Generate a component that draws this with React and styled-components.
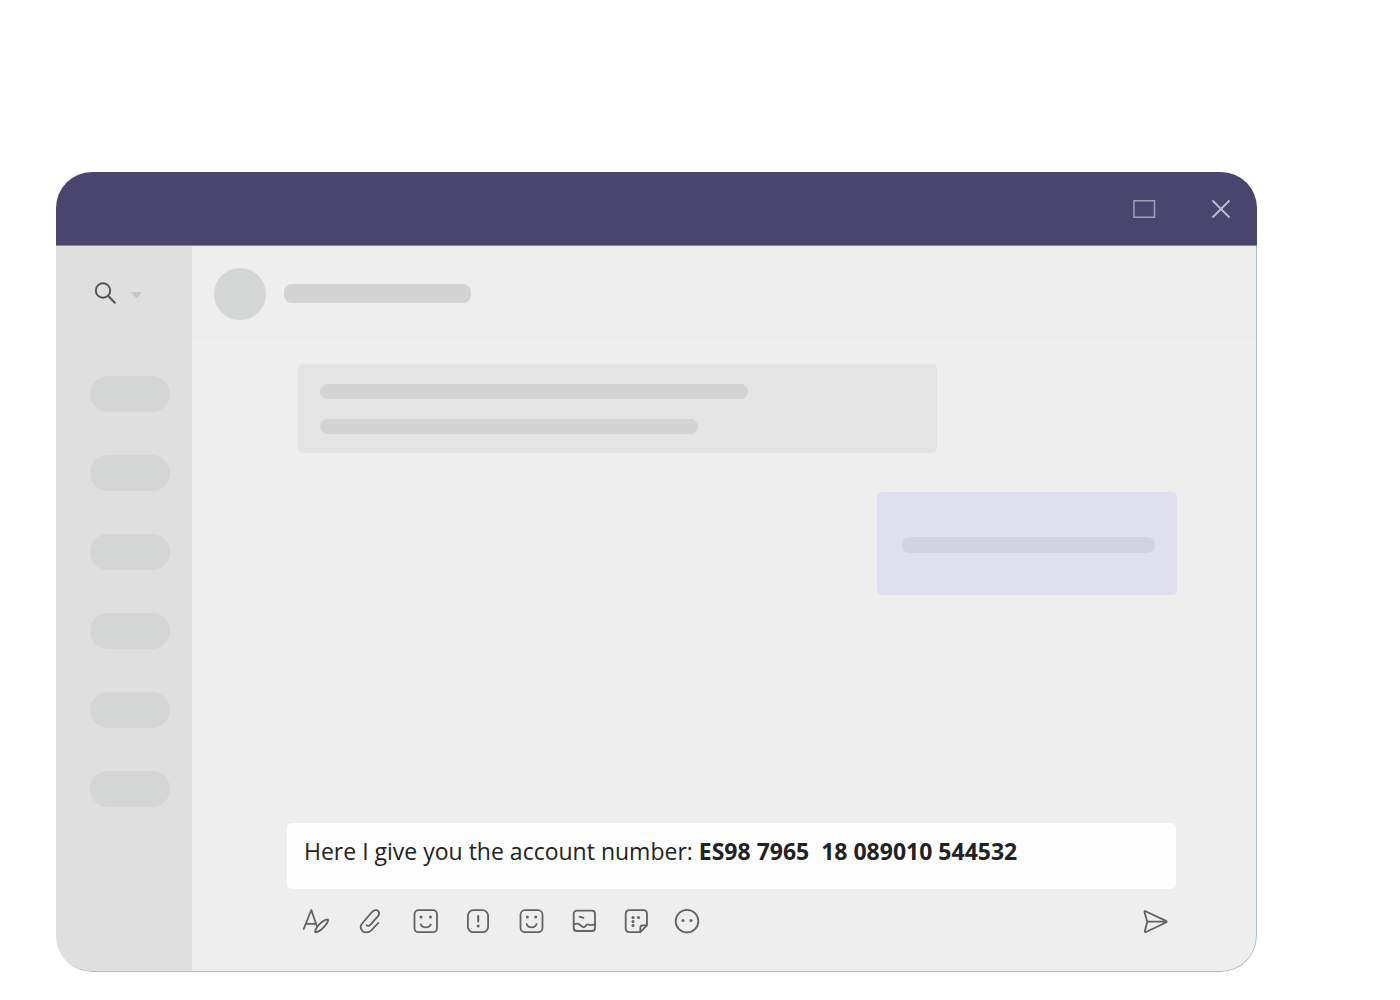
import React, { useState } from "react"
import styled, { createGlobalStyle } from "styled-components"

const GlobalStyle = createGlobalStyle`
  * {
    box-sizing: border-box;
  }

  body {
    margin: 0;
    background: #ffffff;
    font-family: "Open Sans", "Noto Sans", sans-serif;
  }
`

const Page = styled.div`
  display: flex;
  min-height: 100vh;
  padding: 172px 143px 28px 56px;
`

const Window = styled.main`
  flex: 1;
  min-width: 0;
  display: flex;
  flex-direction: column;
  border-radius: 36px;
  overflow: hidden;
`

const TitleBar = styled.header`
  display: flex;
  justify-content: flex-end;
  align-items: center;
  gap: 48px;
  height: 74px;
  padding-right: 22px;
  background: #4a456d;
  border-bottom: 1px solid #8c83a8;
`

const IconButton = styled.button`
  display: flex;
  flex: none;
  padding: 0;
  border: 0;
  background: none;
  color: ${props => props.$color || "#626262"};
  cursor: pointer;
`

const Body = styled.div`
  flex: 1;
  display: flex;
  border: solid #a9bccb;
  border-width: 0 1px 1px 0;
  border-radius: 0 0 36px 36px;
  background: #eeeeee;
  overflow: hidden;
`

const Sidebar = styled.nav`
  flex: none;
  width: 136px;
  background: #dfdfdf;
`

const SearchRow = styled.div`
  display: flex;
  align-items: center;
  gap: 12px;
  height: 92px;
  padding-left: 37px;
`

const ContactList = styled.ul`
  display: flex;
  flex-direction: column;
  gap: 43px;
  margin: 38px 0 0;
  padding: 0 0 0 34px;
  list-style: none;
`

const Contact = styled.li`
  width: 80px;
  height: 36px;
  border-radius: 18px;
  background: #d4d5d5;
`

const Chat = styled.section`
  flex: 1;
  min-width: 0;
  display: flex;
  flex-direction: column;
`

const ChatHeader = styled.div`
  display: flex;
  align-items: center;
  gap: 18px;
  height: 92px;
  padding-top: 4px;
  padding-left: 22px;
  border-bottom: 1px solid #e8e8e8;
`

const Avatar = styled.div`
  width: 52px;
  height: 52px;
  border-radius: 50%;
  background: #d4d5d5;
`

const Line = styled.div`
  width: ${props => props.$width}px;
  max-width: 100%;
  height: ${props => props.$height || 15}px;
  border-radius: 8px;
  background: ${props => props.$color || "#d3d3d3"};
`

const Messages = styled.div`
  flex: 1;
  display: flex;
  flex-direction: column;
  align-items: flex-start;
  gap: 39px;
  padding: 26px 79px 40px 106px;
`

const Message = styled.div`
  display: flex;
  flex-direction: column;
  justify-content: center;
  gap: 20px;
  width: ${props => (props.$own ? 300 : 639)}px;
  height: ${props => (props.$own ? 103 : 89)}px;
  padding: ${props => (props.$own ? "3px 22px 0 25px" : "0 22px")};
  align-self: ${props => (props.$own ? "flex-end" : "flex-start")};
  border-radius: 5px;
  background: ${props => (props.$own ? "#e0dfed" : "#e4e4e4")};
`

const Composer = styled.div`
  padding: 0 80px 35px 95px;
`

const MessageBox = styled.div`
  min-height: 66px;
  padding: 11px 17px;
  border-radius: 5px;
  background: #fefefe;
  color: #222222;
  font-size: 23px;
  line-height: 34px;
  white-space: pre-wrap;
  outline: none;
`

const Toolbar = styled.div`
  display: flex;
  align-items: center;
  gap: 23px;
  margin-top: 17px;
  padding: 0 6px 0 15px;
`

const Spacer = styled.div`
  flex: 1;
`

const Svg = styled.svg`
  display: block;
  fill: none;
  stroke: currentColor;
  stroke-width: ${props => props.$stroke || 1.8};
  stroke-linecap: round;
  stroke-linejoin: round;
`

const Tool = ({ label, children }) => (
  <IconButton type="button" aria-label={label}>
    <Svg width="30" height="30" viewBox="0 0 30 30">
      {children}
    </Svg>
  </IconButton>
)

const Dot = ({ x, y }) => <circle cx={x} cy={y} r="1.5" fill="currentColor" stroke="none" />

export default function App() {
  const [maximized, setMaximized] = useState(false)

  return (
    <Page>
      <GlobalStyle />
      <Window>
        <TitleBar>
          <IconButton
            type="button"
            aria-label="Maximize"
            aria-pressed={maximized}
            $color="#a29fb8"
            onClick={() => setMaximized(!maximized)}
          >
            <Svg width="30" height="30" viewBox="0 0 30 30" $stroke="1.5">
              <path d="M5 6.800h20.500v16.500H5z" strokeLinejoin="miter" />
            </Svg>
          </IconButton>
          <IconButton type="button" aria-label="Close" $color="#c0bdd0">
            <Svg width="28" height="30" viewBox="0 0 28 30" $stroke="1.8">
              <path d="M6 7l16 16M22 7L6 23" />
            </Svg>
          </IconButton>
        </TitleBar>
        <Body>
          <Sidebar>
            <SearchRow>
              <IconButton type="button" aria-label="Search" $color="#555555">
                <Svg width="24" height="26" viewBox="0 0 24 26" $stroke="2">
                  <circle cx="10" cy="11.500" r="7.200" />
                  <path d="M15.300 17l6.500 6.800" />
                </Svg>
              </IconButton>
              <IconButton type="button" aria-label="Filter" $color="#c6c6c6">
                <svg width="14" height="14" viewBox="0 0 14 14">
                  <path d="M2 7h11L7.500 13.500z" fill="currentColor" />
                </svg>
              </IconButton>
            </SearchRow>
            <ContactList>
              {[1, 2, 3, 4, 5, 6].map(id => <Contact key={id} />)}
            </ContactList>
          </Sidebar>
          <Chat>
            <ChatHeader>
              <Avatar />
              <Line $width={187} $height={19} />
            </ChatHeader>
            <Messages>
              <Message>
                <Line $width={428} />
                <Line $width={378} />
              </Message>
              <Message $own>
                <Line $width={253} $height={16} $color="#d3d2e1" />
              </Message>
            </Messages>
            <Composer>
              <MessageBox
                role="textbox"
                aria-label="Message"
                contentEditable
                suppressContentEditableWarning
                spellCheck={false}
              >
                Here I give you the account number: <b>{"ES98 7965  18 089010 544532"}</b>
              </MessageBox>
              <Toolbar>
                <Tool label="Format">
                  <path d="M1.700 23L9.300 4L14.800 20M4.300 17.800H14" />
                  <path d="M13.300 26.300C12.500 22.500 20 13.800 25.800 13.300C27.500 15.500 19.500 25.800 13.300 26.300Z" />
                </Tool>
                <Tool label="Attach file">
                  <path d="M23.300 17L16.300 24.300C13.500 27 9.500 27 7.300 24.800C5.200 22.500 5.200 19.500 7.600 17L16.500 6.500C18.700 4 21.500 3.400 23.200 5C24.800 6.700 24.200 8.800 22.600 10.700L15.500 18.700C14 20.200 12.700 20.300 11.500 19.200" />
                </Tool>
                <Tool label="Emoji">
                  <rect x="6.500" y="4.200" width="22.500" height="22" rx="4" />
                  <Dot x="13" y="11" />
                  <Dot x="22.500" y="11" />
                  <path d="M12.700 18.300C14 22.500 21.500 22.500 22.800 18.300" />
                </Tool>
                <Tool label="Mark as important">
                  <rect x="6.900" y="4.200" width="20.200" height="22" rx="5.500" />
                  <path d="M17.200 10V15.500" strokeWidth="2" />
                  <Dot x="17.200" y="20" />
                </Tool>
                <Tool label="Reaction">
                  <rect x="6.500" y="4.200" width="22" height="22" rx="4.500" />
                  <Dot x="13.400" y="11" />
                  <Dot x="21.700" y="11" />
                  <path d="M12.700 18C14 22.500 21 22.500 22.500 18" />
                </Tool>
                <Tool label="Image">
                  <rect x="6.700" y="4.700" width="21.300" height="20.300" rx="3" />
                  <path d="M7 18.500C9 17.300 11 17.300 12.500 18.500L15.500 20.800C16.700 21.700 17.500 21.500 18.300 20.300C19.500 18.500 20.500 18 21.800 18.700C23.500 19.600 25.500 19 28 18.500M12.500 10.700L16.500 11.800" />
                </Tool>
                <Tool label="Sticker">
                  <path d="M20.300 26.200H9.500C7 26.200 5.700 24.700 5.700 22.200V8.200C5.700 5.700 7 4.200 9.500 4.200H23.300C25.800 4.200 27 5.700 27 8.200V19.300L20.300 26.200V21.800C20.300 20 21 19.300 22.800 19.300H27" />
                  <Dot x="13" y="11.500" />
                  <Dot x="18.500" y="11.500" />
                  <Dot x="13" y="15.500" />
                  <Dot x="13" y="19.500" />
                </Tool>
                <Tool label="Avatar">
                  <circle cx="14" cy="15.200" r="11.300" />
                  <Dot x="10" y="14.500" />
                  <Dot x="18" y="14.500" />
                </Tool>
                <Spacer />
                <Tool label="Send">
                  <path d="M5.500 5.200C4.800 4.900 4.300 5.300 4.500 6.200L7.300 15.700L4.800 25C4.600 25.900 5.200 26.300 6 26L26 16.500C26.900 16 26.900 15.300 26 14.900ZM7.300 15.700H25" />
                </Tool>
              </Toolbar>
            </Composer>
          </Chat>
        </Body>
      </Window>
    </Page>
  )
}
